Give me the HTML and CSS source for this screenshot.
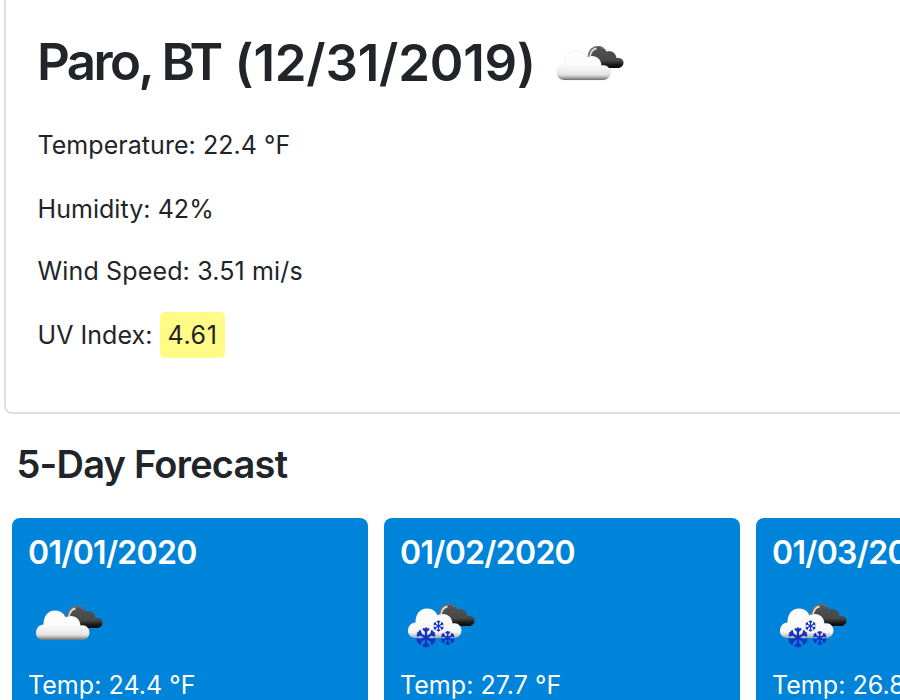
FILE: index.html
```html
<!DOCTYPE html>
<html lang="en">
<head>
<meta charset="utf-8">
<title>Weather Dashboard</title>
<link rel="stylesheet" href="styles.css">
</head>
<body>
<svg class="defs" width="0" height="0">
  <defs>
    <linearGradient id="light" x1="0" y1="0" x2="0" y2="1">
      <stop offset="0" stop-color="#fff"/><stop offset=".5" stop-color="#fbfbfb"/><stop offset=".82" stop-color="#e4e4e4"/><stop offset=".9" stop-color="#b8b8b8"/><stop offset="1" stop-color="#6c6c6c"/>
    </linearGradient>
    <linearGradient id="snowy" x1="0" y1="0" x2="0" y2="1">
      <stop offset="0" stop-color="#fff"/><stop offset=".8" stop-color="#f7f7f7"/><stop offset="1" stop-color="#aaa"/>
    </linearGradient>
    <linearGradient id="dark" x1="0" y1="0" x2="0" y2="1">
      <stop offset="0" stop-color="#555"/><stop offset=".65" stop-color="#484848"/><stop offset=".85" stop-color="#181818"/><stop offset="1" stop-color="#050505"/>
    </linearGradient>
    <filter id="soft" x="-10%" y="-10%" width="120%" height="120%"><feGaussianBlur stdDeviation=".7"/></filter>
    <path id="front" d="M9.5 38C5 38 2 35 2 31C2 26 5 23 9.5 22.5C9.5 14 14 8.5 21 8.5C26.500 8.5 30 11.500 31.500 15.500C33 14.500 35 14 37 14C42 14 46 17.500 46.500 23.500C51.500 22 55.500 26 55.500 30.500C55.500 35 52 38 48 38Z"/>
    <path id="back" d="M33 15C33 8 38 4 43 4C47 4 50 6 51.500 9.500C56 7.500 61 11 61.500 16C66 15.500 68.500 17.500 68.500 20.500C68.500 24 66 26 62 26L46 26C46 20 40 14 33 15Z"/>
    <g id="arm"><path d="M0 0V-10M-3-9L0-6L3-9"/></g>
    <g id="flake" fill="none" stroke="#1530c2" stroke-width="2.200">
      <use href="#arm"/><use href="#arm" transform="rotate(60)"/><use href="#arm" transform="rotate(120)"/><use href="#arm" transform="rotate(180)"/><use href="#arm" transform="rotate(240)"/><use href="#arm" transform="rotate(300)"/>
    </g>
    <g id="clouds" filter="url(#soft)">
      <use href="#back" fill="url(#dark)"/>
      <path d="M33 15C34 8 38 4.500 43 4.500C45.500 4.500 47.500 5.500 49 7" fill="none" stroke="#777" stroke-width="1.200"/>
      <path d="M35 14C36 9.500 38.500 7 41.500 6.500" fill="none" stroke="#ddd" stroke-width="1.800"/>
    </g>
    <g id="cloudy">
      <use href="#clouds"/>
      <g filter="url(#soft)"><use href="#front" fill="url(#light)" stroke="#999" stroke-opacity=".18" stroke-width=".7"/></g>
    </g>
    <g id="snow">
      <use href="#clouds"/>
      <g filter="url(#soft)">
        <use href="#front" fill="url(#snowy)"/>
        <use href="#flake" transform="translate(20 37.500)"/>
        <use href="#flake" transform="translate(32.500 26) scale(.54)"/>
        <use href="#flake" transform="translate(41.700 38) scale(.7)"/>
      </g>
    </g>
  </defs>
</svg>
<main class="dashboard">
  <section class="current">
    <h1 class="city"><span class="city-name">Paro, BT</span> <span class="city-date">(12/31/2019)</span>
      <svg class="city-icon" width="72" height="50" viewBox="0 0 72 50"><use href="#cloudy"/></svg></h1>
    <p class="reading temperature">Temperature: 22.4 °F</p>
    <p class="reading humidity">Humidity: 42%</p>
    <p class="reading wind">Wind Speed: 3.51 mi/s</p>
    <p class="reading uv">UV Index: <span class="uv-badge">4.61</span></p>
  </section>
  <h2 class="forecast-title">5-Day Forecast</h2>
  <section class="forecast">
    <article class="day">
      <h3 class="date">01/01/2020</h3>
      <svg class="day-icon" width="72" height="50" viewBox="0 0 72 50"><use href="#cloudy"/></svg>
      <p class="temp">Temp: 24.4 °F</p>
    </article>
    <article class="day">
      <h3 class="date">01/02/2020</h3>
      <svg class="day-icon snow-icon" width="72" height="50" viewBox="0 0 72 50"><use href="#snow"/></svg>
      <p class="temp">Temp: 27.7 °F</p>
    </article>
    <article class="day">
      <h3 class="date">01/03/2020</h3>
      <svg class="day-icon snow-icon" width="72" height="50" viewBox="0 0 72 50"><use href="#snow"/></svg>
      <p class="temp">Temp: 26.8 °F</p>
    </article>
  </section>
</main>
</body>
</html>
```
FILE: styles.css
```css
* { box-sizing: border-box; }
body { margin: 0; background: #fff; color: #212529; font-family: Inter, "Liberation Sans", sans-serif; font-size: 25px; }
h1, h2, h3, p { margin: 0; white-space: nowrap; }
svg { display: block; flex: none; }
.defs { position: absolute; }
.dashboard { height: 700px; overflow: hidden; }
.current { height: 414px; margin-left: 4px; padding: 32px 0 0 31.500px; border: solid #dfdfdf; border-width: 0 0 2px 2px; border-bottom-left-radius: 8px; }
.city { display: flex; align-items: center; height: 60px; margin-left: -.5px; font-size: 51px; font-weight: 580; line-height: 60px; }
.city-name { letter-spacing: -2.600px; margin-right: 14px; }
.city-date { padding-top: 1px; letter-spacing: -.2px; }
.city-icon { margin: 10px 0 0 19px; }
.reading { height: 38px; line-height: 38px; margin-bottom: 25px; letter-spacing: .05px; }
.temperature { margin-top: 34px; }
.humidity { margin-top: 26px; margin-bottom: 24px; }
.wind { margin-bottom: 26px; letter-spacing: .15px; }
.uv { display: flex; align-items: center; gap: 7px; }
.uv-badge { height: 46px; padding: 0 8px; border-radius: 5px; background: #fffb86; line-height: 46px; letter-spacing: .6px; }
.forecast-title { margin: 26px 0 0 16.500px; font-size: 38px; font-weight: 570; line-height: 48px; letter-spacing: -.78px; }
.forecast { display: flex; gap: 16px; margin: 30px 0 0 12px; }
.day { flex: 0 0 356px; height: 300px; padding: 16px; border-radius: 8px; background: #0084d9; color: #fff; }
.date { font-size: 32px; font-weight: 570; line-height: 38px; letter-spacing: -.7px; }
.day-icon { margin: 30px 0 0 6px; }
.snow-icon { margin-top: 28px; }
.temp { margin-top: 14px; line-height: 38px; letter-spacing: .05px; }
.snow-icon + .temp { margin-top: 16px; }
```
